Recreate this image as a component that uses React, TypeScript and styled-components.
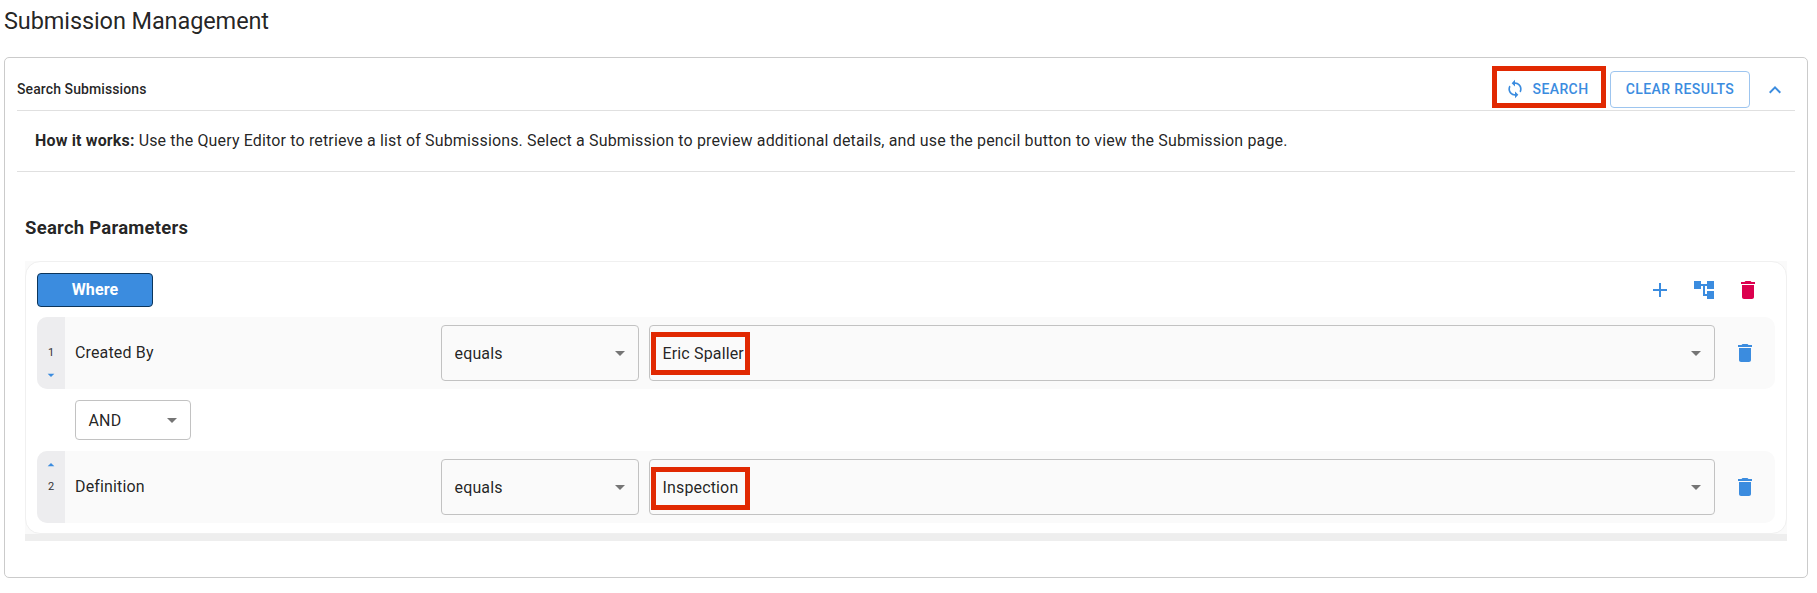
import React from "react";
import styled, { createGlobalStyle } from "styled-components";

const GlobalStyle = createGlobalStyle`
  * { box-sizing: border-box; }
  body {
    margin: 0;
    background: #fff;
    color: rgba(0, 0, 0, 0.87);
    font-family: Roboto, "Liberation Sans", sans-serif;
    font-size: 16px;
    letter-spacing: 0.15px;
    line-height: 24px;
  }
`;

const BLUE = "#3b8cdf";

const Page = styled.main`
  padding: 5px 9px 15px 4px;
  height: 593px;
  display: flex;
  flex-direction: column;
  gap: 20px;
`;

const Title = styled.h1`
  margin: 0;
  font-size: 23.5px;
  font-weight: 400;
  line-height: 32px;
  letter-spacing: -0.1px;
`;

const Card = styled.section`
  height: 521px;
  border: 1px solid #cbcbcb;
  border-radius: 5px;
  padding: 0 12px;
`;

const CardHeader = styled.header`
  display: flex;
  align-items: center;
  height: 53px;
  padding-top: 11px;
  border-bottom: 1px solid #e0e0e0;
`;

const CardTitle = styled.h2`
  margin: 0 0 2px;
  flex: 1;
  font-size: 14px;
  font-weight: 500;
  letter-spacing: 0.1px;
`;

const Button = styled.button<{ $outlined?: boolean }>`
  height: 37px;
  display: flex;
  align-items: center;
  justify-content: center;
  gap: 8px;
  padding: 0 0 1px;
  width: ${(p) => (p.$outlined ? "140px" : "104px")};
  border: ${(p) => (p.$outlined ? "1px solid #9dc5ef" : "0")};
  border-radius: 4px;
  background: transparent;
  color: ${BLUE};
  font: 500 14px/24px Roboto, "Liberation Sans", sans-serif;
  letter-spacing: 0.4px;
  text-transform: uppercase;
`;

const SearchHighlight = styled.div`
  height: 42px;
  margin: -5px 4px 0 0;
  padding: 5px 5px 0 0;
  width: 114px;
  border: 5px solid #e12902;
  display: flex;
  align-items: center;
`;

const IconButton = styled.button<{ $width: number; $tone?: string; $inset?: number }>`
  width: ${(p) => p.$width}px;
  height: 36px;
  display: flex;
  align-items: center;
  justify-content: center;
  padding: 0 0 0 ${(p) => p.$inset ?? 0}px;
  border: 0;
  background: none;
  color: ${(p) => p.$tone ?? BLUE};
`;

const HelpText = styled.p`
  margin: 0;
  height: 61px;
  padding: 18px 18px 0;
  border-bottom: 1px solid #e0e0e0;
`;

const Strong = styled.b`
  font-weight: 700;
`;

const SectionTitle = styled.h3`
  margin: 44px 0 0 8px;
  font-size: 18.5px;
  font-weight: 700;
  line-height: 24px;
  letter-spacing: 0.25px;
`;

const QueryFrame = styled.div`
  margin: 21px 8px 0;
  border-bottom: 7px solid #eee;
  background: #fafafa;
`;

const QueryGroup = styled.div`
  height: 273px;
  border: 1px solid #f0f0f0;
  border-radius: 15px;
  background: #fff;
  padding: 11px;
`;

const GroupHeader = styled.div`
  display: flex;
  align-items: center;
  justify-content: space-between;
  height: 34px;
  margin-bottom: 10px;
`;

const WhereButton = styled.button`
  width: 116px;
  height: 34px;
  padding: 0;
  border: 1px solid #0c355b;
  border-radius: 4px;
  background: ${BLUE};
  color: #fff;
  font: 700 16px/24px Roboto, "Liberation Sans", sans-serif;
  letter-spacing: 0.15px;
`;

const GroupActions = styled.div`
  display: flex;
  padding-right: 5px;
`;

const ConditionRow = styled.div`
  display: flex;
  align-items: center;
  height: 72px;
  border-radius: 10px;
  background: #fafafa;
  overflow: hidden;
`;

const OrderHandle = styled.div`
  width: 28px;
  height: 100%;
  display: grid;
  grid-template-rows: 28px 16px 28px;
  align-items: center;
  justify-items: center;
  background: #ededef;
  color: ${BLUE};
`;

const OrderNumber = styled.span`
  grid-row: 2;
  color: #333;
  font-size: 11px;
  line-height: 16px;
  letter-spacing: 0;
`;

const OrderArrow = styled.span<{ $row: number }>`
  grid-row: ${(p) => p.$row};
  display: flex;
`;

const FieldName = styled.span`
  width: 366px;
  margin: 0 0 1px 10px;
`;

const Select = styled.div<{ $width?: number; $height?: number }>`
  position: relative;
  flex: ${(p) => (p.$width ? "none" : 1)};
  width: ${(p) => (p.$width ? `${p.$width}px` : "auto")};
  height: ${(p) => p.$height ?? 56}px;
  display: flex;
  align-items: center;
  justify-content: space-between;
  padding: 0 6px 0 12.5px;
  border: 1px solid #c2c2c2;
  border-radius: 4px;
  color: rgba(0, 0, 0, 0.87);
`;

const SelectValue = styled.span`
  padding-top: 2px;
`;

const OperatorSlot = styled.div`
  width: 208px;
`;

const ValueHighlight = styled.span<{ $top: number }>`
  position: absolute;
  left: 1px;
  top: ${(p) => p.$top}px;
  width: 99px;
  height: 43px;
  border: 5px solid #e12902;
`;

const JoinRow = styled.div`
  height: 62px;
  padding: 11px 0 0 38px;
`;

const paths = {
  sync: "M12 4V1L8 5l4 4V6c3.31 0 6 2.69 6 6 0 1.01-.25 1.97-.7 2.8l1.46 1.46C19.54 15.03 20 13.57 20 12c0-4.42-3.58-8-8-8zm0 14c-3.31 0-6-2.69-6-6 0-1.01.25-1.97.7-2.8L5.24 7.74C4.46 8.97 4 10.43 4 12c0 4.42 3.58 8 8 8v3l4-4-4-4v3z",
  collapse: "M12 8l-6 6 1.41 1.41L12 10.83l4.59 4.58L18 14z",
  add: "M19 13h-6v6h-2v-6H5v-2h6V5h2v6h6v2z",
  tree: "M22 11V3h-7v3H9V3H2v8h7V8h2v10h4v3h7v-8h-7v3h-2V8h2v3z",
  trash: "M6 19c0 1.1.9 2 2 2h8c1.1 0 2-.9 2-2V7H6v12zM19 4h-3.5l-1-1h-5l-1 1H5v2h14V4z",
  down: "M7 10l5 5 5-5z",
  up: "M7 14l5-5 5 5z",
};

type IconProps = { name: keyof typeof paths; size?: number; color?: string };

const Icon = ({ name, size = 24, color = "currentColor" }: IconProps) => (
  <svg width={size} height={size} viewBox="0 0 24 24" fill={color} aria-hidden="true">
    <path d={paths[name]} />
  </svg>
);

type Condition = { order: number; field: string; value: string; move: "up" | "down"; markTop: number };

const conditions: Condition[] = [
  { order: 1, field: "Created By", value: "Eric Spaller", move: "down", markTop: 6 },
  { order: 2, field: "Definition", value: "Inspection", move: "up", markTop: 7 },
];

const ConditionLine = ({ order, field, value, move, markTop }: Condition) => (
  <ConditionRow>
    <OrderHandle>
      <OrderArrow $row={move === "up" ? 1 : 3}>
        <Icon name={move} size={16} />
      </OrderArrow>
      <OrderNumber>{order}</OrderNumber>
    </OrderHandle>
    <FieldName>{field}</FieldName>
    <OperatorSlot>
      <Select $width={198}>
        <SelectValue>equals</SelectValue>
        <Icon name="down" color="#757575" />
      </Select>
    </OperatorSlot>
    <Select>
      <SelectValue>{value}</SelectValue>
      <Icon name="down" color="#757575" />
      <ValueHighlight $top={markTop} />
    </Select>
    <IconButton $width={60}>
      <Icon name="trash" />
    </IconButton>
  </ConditionRow>
);

export default function App() {
  return (
    <>
      <GlobalStyle />
      <Page>
        <Title>Submission Management</Title>
        <Card>
          <CardHeader>
            <CardTitle>Search Submissions</CardTitle>
            <SearchHighlight>
              <Button>
                <Icon name="sync" size={20} />
                Search
              </Button>
            </SearchHighlight>
            <Button $outlined>Clear Results</Button>
            <IconButton $width={45} $inset={5}>
              <Icon name="collapse" />
            </IconButton>
          </CardHeader>
          <HelpText>
            <Strong>How it works:</Strong> Use the Query Editor to retrieve a list of Submissions. Select a Submission
            to preview additional details, and use the pencil button to view the Submission page.
          </HelpText>
          <SectionTitle>Search Parameters</SectionTitle>
          <QueryFrame>
            <QueryGroup>
              <GroupHeader>
                <WhereButton>Where</WhereButton>
                <GroupActions>
                  <IconButton $width={44}>
                    <Icon name="add" />
                  </IconButton>
                  <IconButton $width={44}>
                    <Icon name="tree" />
                  </IconButton>
                  <IconButton $width={44} $tone="#dc004e">
                    <Icon name="trash" />
                  </IconButton>
                </GroupActions>
              </GroupHeader>
              <ConditionLine {...conditions[0]} />
              <JoinRow>
                <Select $width={116} $height={40}>
                  <SelectValue>AND</SelectValue>
                  <Icon name="down" color="#757575" />
                </Select>
              </JoinRow>
              <ConditionLine {...conditions[1]} />
            </QueryGroup>
          </QueryFrame>
        </Card>
      </Page>
    </>
  );
}
